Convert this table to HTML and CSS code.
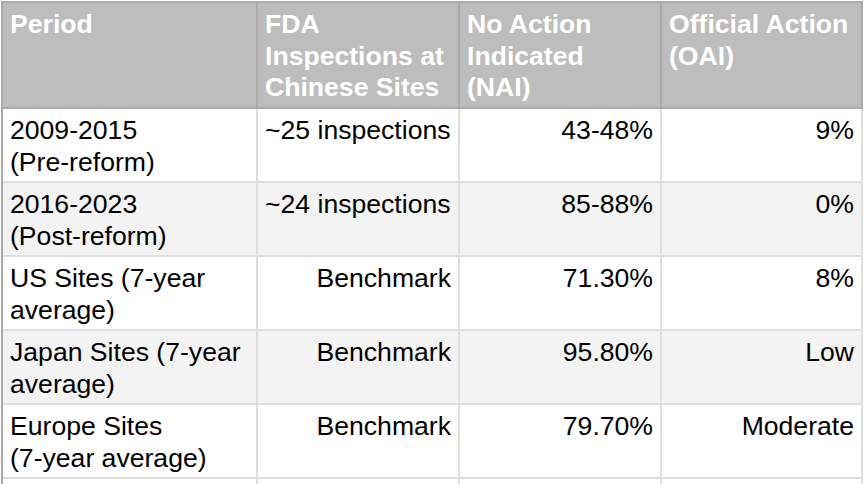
FILE: index.html
```html
<!DOCTYPE html>
<html lang="en">
<head>
<meta charset="utf-8">
<title>FDA Inspections</title>
<link rel="stylesheet" href="styles.css">
</head>
<body>
<table class="sheet">
  <thead>
    <tr>
      <th class="c1">Period</th>
      <th class="c2">FDA<br>Inspections at<br>Chinese Sites</th>
      <th class="c3">No Action<br>Indicated<br>(NAI)</th>
      <th class="c4">Official Action<br>(OAI)</th>
    </tr>
  </thead>
  <tbody>
    <tr>
      <td>2009-2015<br>(Pre-reform)</td>
      <td>~25 inspections</td>
      <td class="num">43-48%</td>
      <td class="num">9%</td>
    </tr>
    <tr class="alt">
      <td>2016-2023<br>(Post-reform)</td>
      <td>~24 inspections</td>
      <td class="num">85-88%</td>
      <td class="num">0%</td>
    </tr>
    <tr>
      <td>US Sites (7-year<br>average)</td>
      <td class="num">Benchmark</td>
      <td class="num">71.30%</td>
      <td class="num">8%</td>
    </tr>
    <tr class="alt">
      <td>Japan Sites (7-year<br>average)</td>
      <td class="num">Benchmark</td>
      <td class="num">95.80%</td>
      <td class="num">Low</td>
    </tr>
    <tr>
      <td>Europe Sites<br>(7-year average)</td>
      <td class="num">Benchmark</td>
      <td class="num">79.70%</td>
      <td class="num">Moderate</td>
    </tr>
    <tr class="blank">
      <td></td>
      <td></td>
      <td></td>
      <td></td>
    </tr>
  </tbody>
</table>
</body>
</html>
```

FILE: styles.css
```css
html, body {
  margin: 0;
  padding: 0;
  background: #ffffff;
}

body {
  font-family: "Liberation Sans", Arial, Helvetica, sans-serif;
  font-size: 26.6px;
  line-height: 31.5px;
  color: #000000;
}

.sheet {
  margin: 1px 0 0 1px;
  width: 862px;
  table-layout: fixed;
  border-collapse: separate;
  border-spacing: 0;
  border-top: 2px solid #aaaaaa;
  border-left: 2px solid #aaaaaa;
}

.sheet th,
.sheet td {
  box-sizing: border-box;
  vertical-align: top;
  text-align: left;
  padding: 6px 7px 3px 7px;
  border-right: 2px solid #dedede;
  border-bottom: 2px solid #dedede;
  white-space: nowrap;
  overflow: hidden;
}

.sheet th {
  background: #bdbdbd;
  color: #ffffff;
  font-weight: bold;
  padding-bottom: 3.5px;
  border-right-color: #aaaaaa;
  border-bottom-color: #aaaaaa;
}

.sheet .c1 { width: 255px; }
.sheet .c2 { width: 202px; }
.sheet .c3 { width: 202px; }
.sheet .c4 { width: 201px; }

.sheet tbody td:first-child {
  border-left: 0;
}

.sheet .alt td {
  background: #f3f3f3;
}

.sheet td.num {
  text-align: right;
}

.sheet .blank td {
  height: 5px;
  padding: 0;
  border-bottom: 0;
  line-height: 0;
}
```
